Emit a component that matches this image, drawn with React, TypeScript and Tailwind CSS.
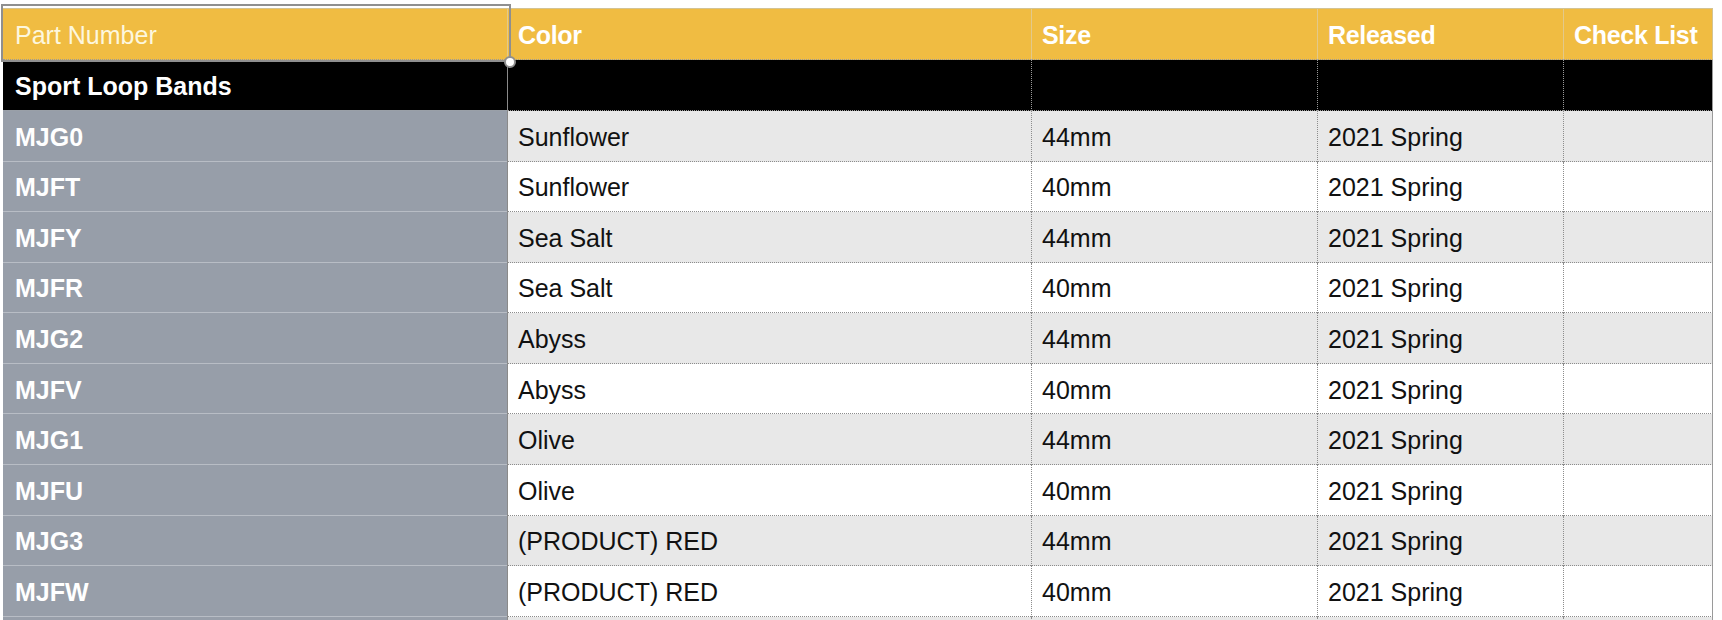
import React from "react"

const rows = [
  { part: "MJG0", color: "Sunflower", size: "44mm", released: "2021 Spring" },
  { part: "MJFT", color: "Sunflower", size: "40mm", released: "2021 Spring" },
  { part: "MJFY", color: "Sea Salt", size: "44mm", released: "2021 Spring" },
  { part: "MJFR", color: "Sea Salt", size: "40mm", released: "2021 Spring" },
  { part: "MJG2", color: "Abyss", size: "44mm", released: "2021 Spring" },
  { part: "MJFV", color: "Abyss", size: "40mm", released: "2021 Spring" },
  { part: "MJG1", color: "Olive", size: "44mm", released: "2021 Spring" },
  { part: "MJFU", color: "Olive", size: "40mm", released: "2021 Spring" },
  { part: "MJG3", color: "(PRODUCT) RED", size: "44mm", released: "2021 Spring" },
  { part: "MJFW", color: "(PRODUCT) RED", size: "40mm", released: "2021 Spring" },
  { part: "", color: "", size: "", released: "" },
]

const cols = "grid grid-cols-[504px_524px_286px_246px_150px]"

export default function App() {
  return (
    <div
      className="relative h-[620px] w-[1722px] overflow-hidden bg-white pl-[3px] pt-[8px] text-[25px] leading-none"
      style={{ fontFamily: '"Liberation Sans", Arial, sans-serif' }}
    >
      <div className="w-[1710px]">
        {/* Header */}
        <div className={cn(cols, "h-[52px] border-t border-[#d3c393] bg-[#f0bc42]")}>
          <div className="flex items-center border-b border-dotted border-b-[#999] pl-[12px] pt-[3px] font-normal text-[#fdf7de]">
            Part Number
          </div>
          {["Color", "Size", "Released", "Check List"].map((h, i) => (
            <div
              key={h}
              className={cn(
                "flex items-center border-b border-l border-dotted border-b-[#999] border-l-[#e3c98a] [border-left-style:solid] pl-[10px] pt-[3px] font-bold tracking-[-0.3px] text-white",
                i === 3 && "border-r border-r-[#d3c393] [border-right-style:solid]"
              )}
            >
              {h}
            </div>
          ))}
        </div>

        {/* Group row */}
        <div className={cn(cols, "h-[51px] bg-black")}>
          <div className="flex items-center border-b border-b-[#9aa0a8] pl-[12px] pt-[3px] font-bold text-white">
            Sport Loop Bands
          </div>
          <div className="border-b border-l border-dotted border-b-[#9a9a9a] border-l-[#8a8a8a] [border-left-style:solid]" />
          <div className="border-b border-l border-dotted border-[#9a9a9a]" />
          <div className="border-b border-l border-dotted border-[#9a9a9a]" />
          <div className="border-b border-l border-r border-dotted border-[#9a9a9a] [border-right-style:solid] border-r-[#9a9a9a]" />
        </div>

        {/* Data rows */}
        {rows.map((r, i) => {
          const shade = i % 2 === 0 ? "bg-[#e8e8e8]" : "bg-white"
          return (
            <div key={i} className={cn(cols, "h-[50.57px]")}>
              <div className="flex items-center border-b border-b-[#b8bdc5] bg-[#979ea9] pl-[12px] pt-[3px] font-bold text-white">
                {r.part}
              </div>
              <div
                className={cn(
                  "flex items-center border-b border-l border-dotted border-b-[#8c8c8c] border-l-[#8a8a8a] [border-left-style:solid] pl-[10px] pt-[3px] text-[#111]",
                  shade
                )}
              >
                {r.color}
              </div>
              <div className={cn("flex items-center border-b border-l border-dotted border-[#8c8c8c] pl-[10px] pt-[3px] text-[#111]", shade)}>
                {r.size}
              </div>
              <div className={cn("flex items-center border-b border-l border-dotted border-[#8c8c8c] pl-[10px] pt-[3px] text-[#111]", shade)}>
                {r.released}
              </div>
              <div
                className={cn(
                  "border-b border-l border-r border-dotted border-[#8c8c8c] [border-right-style:solid] border-r-[#9a9a9a]",
                  shade
                )}
              />
            </div>
          )
        })}
      </div>

      {/* Cell selection outline */}
      <div className="pointer-events-none absolute left-[1px] top-[4px] h-[58px] w-[510px] border-2 border-[#8f8f8f]" />
      <div className="pointer-events-none absolute left-[504px] top-[56px] h-[12px] w-[12px] rounded-full border-2 border-[#8f8f8f] bg-white" />
    </div>
  )
}

function cn(...parts: (string | false | undefined)[]) {
  return parts.filter(Boolean).join(" ")
}
